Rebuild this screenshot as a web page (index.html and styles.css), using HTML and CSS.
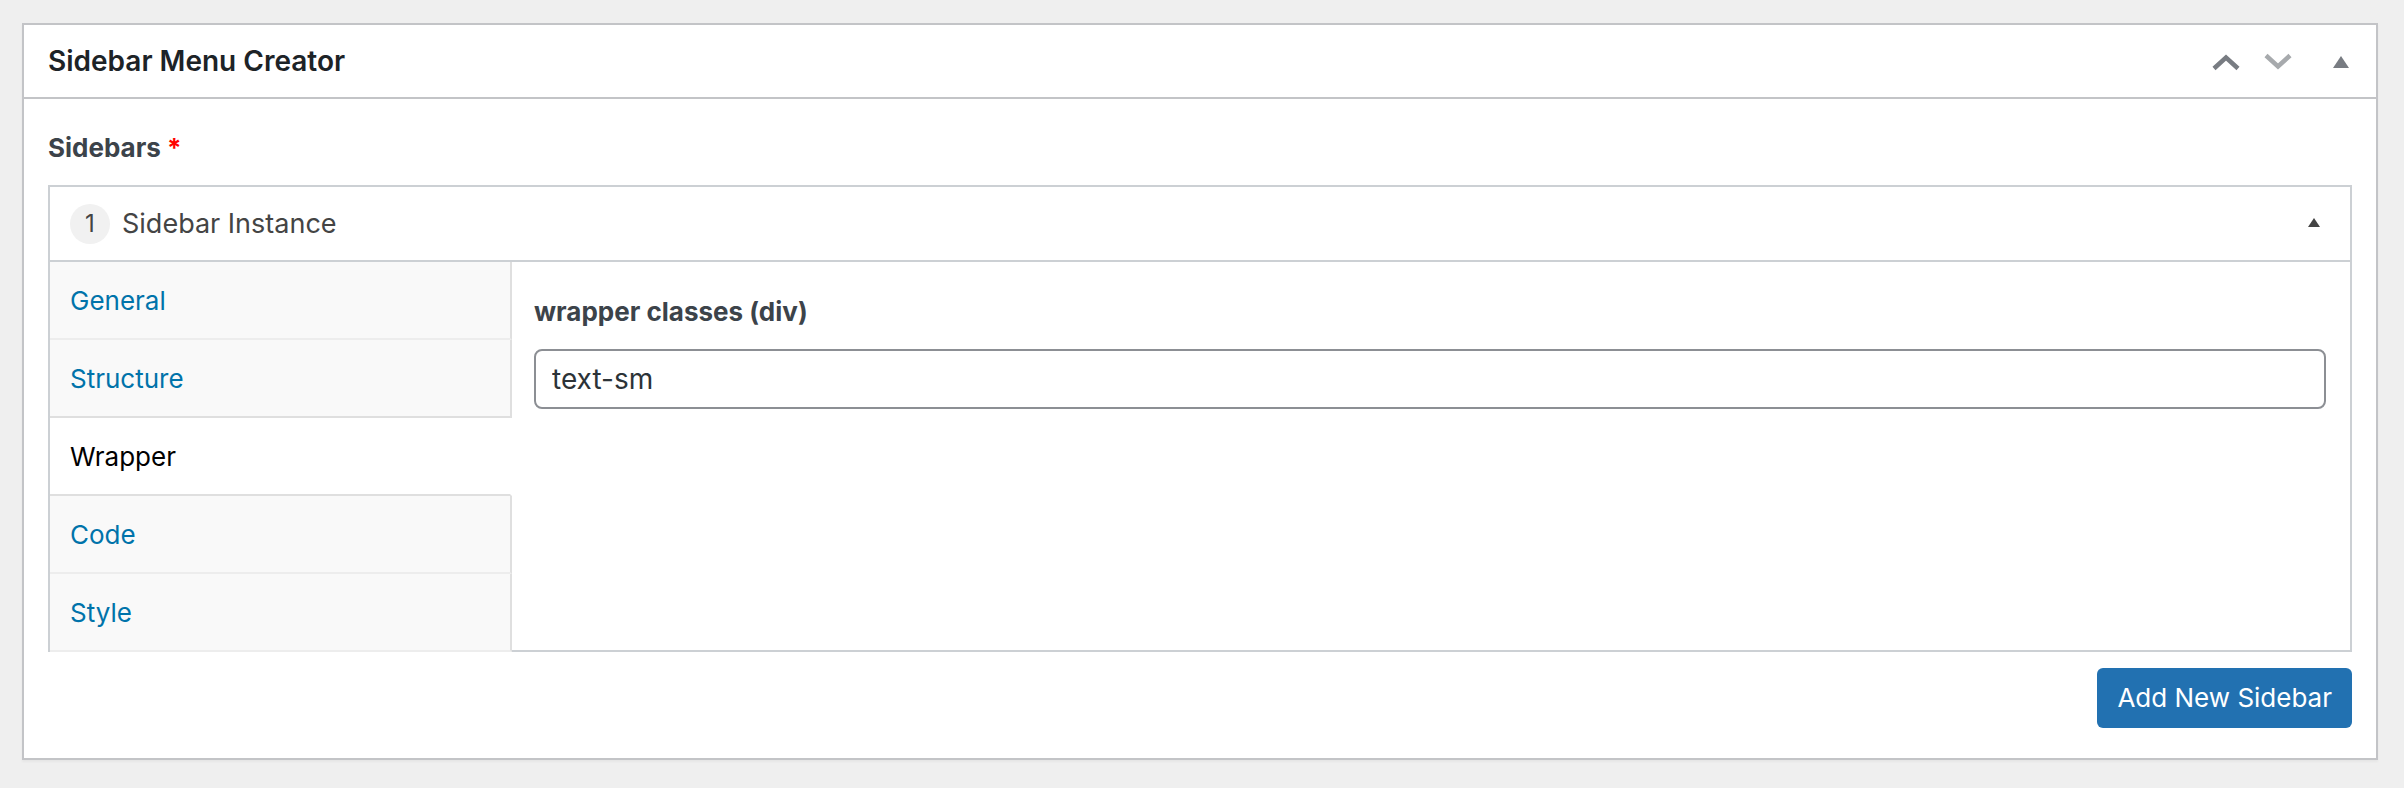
FILE: index.html
```html
<!DOCTYPE html>
<html lang="en">
<head>
<meta charset="utf-8">
<title>Sidebar Menu Creator</title>
<link rel="stylesheet" href="styles.css">
</head>
<body>
<section class="postbox">
  <header class="postbox-header">
    <h2 class="postbox-title">Sidebar Menu Creator</h2>
    <div class="postbox-actions">
      <button class="icon-button" type="button" aria-label="Move up">
        <svg width="28" height="18" viewBox="0 0 28 18"><path d="M2 15.500 14 4.500 26 15.500" fill="none" stroke="#787c82" stroke-width="4.500"/></svg>
      </button>
      <button class="icon-button" type="button" aria-label="Move down" disabled>
        <svg width="28" height="18" viewBox="0 0 28 18"><path d="M2 2.500 14 13.500 26 2.500" fill="none" stroke="#a7aaad" stroke-width="4.500"/></svg>
      </button>
      <button class="icon-button icon-button-toggle" type="button" aria-label="Toggle panel">
        <svg width="16" height="12" viewBox="0 0 16 12"><path d="M8 0 16 12H0z" fill="#787c82"/></svg>
      </button>
    </div>
  </header>
  <div class="postbox-body">
    <h3 class="label">Sidebars <span class="required">*</span></h3>
    <div class="instance">
      <div class="instance-header">
        <span class="instance-number">1</span>
        <span class="instance-title">Sidebar Instance</span>
        <button class="icon-button instance-toggle" type="button" aria-label="Toggle instance">
          <svg width="12" height="9" viewBox="0 0 12 9"><path d="M6 0 12 9H0z" fill="#444"/></svg>
        </button>
      </div>
      <div class="instance-body">
        <ul class="tabs">
          <li class="tab"><a class="tab-link" href="#general">General</a></li>
          <li class="tab tab-before-active"><a class="tab-link" href="#structure">Structure</a></li>
          <li class="tab tab-active"><a class="tab-link" href="#wrapper">Wrapper</a></li>
          <li class="tab"><a class="tab-link" href="#code">Code</a></li>
          <li class="tab"><a class="tab-link" href="#style">Style</a></li>
        </ul>
        <div class="fields">
          <label class="label" for="wrapper-classes">wrapper classes (div)</label>
          <input class="text-input" id="wrapper-classes" type="text" value="text-sm">
        </div>
      </div>
    </div>
    <div class="actions">
      <button class="button-primary" type="button">Add New Sidebar</button>
    </div>
  </div>
</section>
</body>
</html>
```
FILE: styles.css
```css
* {
  box-sizing: border-box;
}

body {
  margin: 0;
  padding: 23px 26px 28px 22px;
  background: #efefef;
  color: #3c434a;
  font: 26px/36px Inter, "Liberation Sans", sans-serif;
}

.postbox {
  border: 2px solid #c3c4c7;
  background: #fff;
  box-shadow: 0 2px 2px rgba(0, 0, 0, 0.04);
}

.postbox-header {
  display: flex;
  align-items: center;
  justify-content: space-between;
  height: 74px;
  padding: 0 27px 0 24px;
  border-bottom: 2px solid #c3c4c7;
}

.postbox-title {
  margin: 0;
  color: #1d2327;
  font-size: 28px;
  font-weight: 600;
}

.postbox-actions {
  display: flex;
  align-items: center;
  gap: 24px;
  padding-top: 1px;
}

.icon-button {
  display: flex;
  padding: 0;
  border: 0;
  background: none;
}

.icon-button-toggle {
  margin-left: 17px;
}

.postbox-body {
  padding: 31px 24px 30px;
}

.label {
  display: block;
  margin: 0 0 19px;
  font-size: 26px;
  font-weight: 700;
}

.required {
  color: #f00;
}

.instance {
  border: 2px solid #ccd0d4;
  border-bottom: 0;
}

.instance-header {
  display: flex;
  align-items: center;
  gap: 12px;
  height: 75px;
  padding: 0 20px;
  border-bottom: 2px solid #ccd0d4;
  color: #444;
}

.instance-number {
  width: 40px;
  border-radius: 50%;
  background: #f1f1f1;
  font-size: 24px;
  line-height: 40px;
  text-align: center;
}

.instance-title {
  font-size: 27px;
}

.instance-toggle {
  margin: 0 10px 2px auto;
}

.instance-body {
  display: flex;
}

.tabs {
  flex: 0 0 calc(20% + 2px);
  margin: 0;
  padding: 0;
  list-style: none;
}

.tab {
  border-right: 2px solid #dfdfdf;
  border-bottom: 2px solid #ededed;
  background: #f9f9f9;
}

.tab-before-active {
  border-bottom-color: #dfdfdf;
}

.tab-active {
  border-right-color: #fff;
  border-bottom-color: #dfdfdf;
  background: #fff;
}

.tab-link {
  display: block;
  padding: 21px 20px 19px;
  color: #0073aa;
  text-decoration: none;
}

.tab-active .tab-link {
  color: #000;
}

.fields {
  flex: 1;
  padding: 32px 24px 24px 22px;
  border-bottom: 2px solid #ccd0d4;
}

.text-input {
  display: block;
  width: 100%;
  height: 60px;
  padding: 0 16px;
  border: 2px solid #8c8f94;
  border-radius: 8px;
  background: #fff;
  color: #2c3338;
  font: inherit;
  font-size: 28px;
}

.actions {
  display: flex;
  justify-content: flex-end;
  margin-top: 16px;
}

.button-primary {
  height: 60px;
  padding: 0 20px;
  border: 0;
  border-radius: 6px;
  background: #2271b1;
  color: #fff;
  font: inherit;
}
```
